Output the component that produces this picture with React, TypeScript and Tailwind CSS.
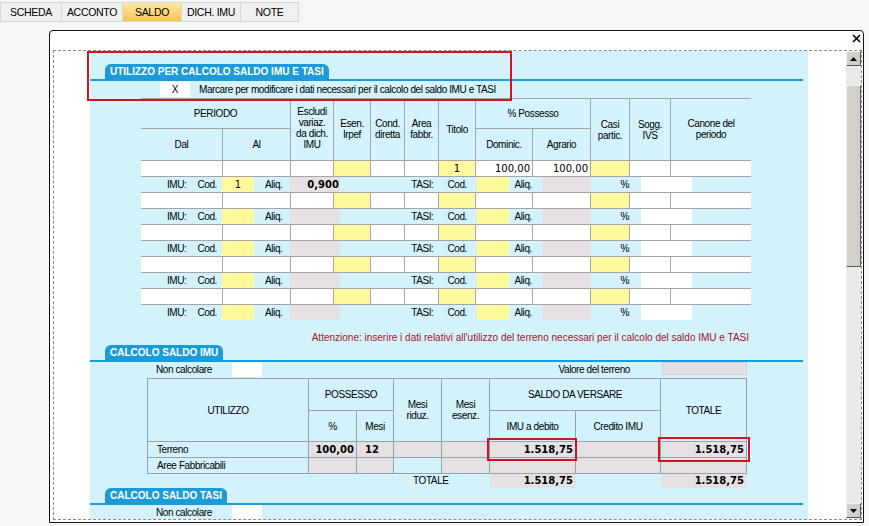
import React from 'react';

// Column template shared by the header and body rows of the "utilizzo" table
const useCols = 'grid grid-cols-[81px_68px_43px_37px_34px_34px_37px_57px_58px_39px_41px_81px]';
const imuCols = 'grid grid-cols-[161px_48px_37px_48px_48px_86px_85px_86px]';
const num = "font-['DejaVu_Sans',Verdana,sans-serif] tracking-normal";

const tabs = [
  { label: 'SCHEDA', cls: 'w-[62px] bg-[#f0f0f0]' },
  { label: 'ACCONTO', cls: 'w-[62px] bg-[#f0f0f0]' },
  { label: 'SALDO', cls: 'w-[60px] bg-linear-to-b from-[#fde9a4] to-[#f8c646]' },
  { label: 'DICH. IMU', cls: 'w-[60px] bg-[#f0f0f0]' },
  { label: 'NOTE', cls: 'w-[59px] bg-[#f0f0f0]' },
];

// cell background per column in the white input rows
const rowBg = ['bg-white', 'bg-white', 'bg-white', 'bg-[#fff99b]', 'bg-white', 'bg-white', 'bg-[#fff99b]', 'bg-white', 'bg-white', 'bg-[#fff99b]', 'bg-white', 'bg-white'];

const SectionTab = ({ title }: { title: string }) => (
  <div>
    <div className="flex pl-[15px]">
      <div className="h-[15px] px-[5px] rounded-t-[6px] bg-[#1b9bd7] text-white font-bold tracking-normal text-[10px] flex items-center">
        {title}
      </div>
    </div>
    <div className="h-[2px] mr-[5px] bg-[#1b9bd7]" />
  </div>
);

const RedBox = ({ cls }: { cls: string }) => (
  <div className={`absolute border-2 border-[#d3141c] pointer-events-none ${cls}`} />
);

const InputRow = ({ first }: { first?: boolean }) => (
  <div className={`${useCols} ${first ? 'h-[16px] border-b' : 'h-[17px] border-y'} border-[#a6a6a6]`}>
    {rowBg.map((bg, i) => (
      <div key={i} className={`${bg} ${i > 0 ? 'border-l border-[#a6a6a6]' : ''} flex items-center ${i === 6 ? 'justify-center' : 'justify-end pr-[2px]'} ${num}`}>
        {first && i === 6 && '1'}
        {first && (i === 7 || i === 8) && '100,00'}
      </div>
    ))}
  </div>
);

const ImuRow = ({ first }: { first?: boolean }) => (
  <div className="flex h-[15px] items-center">
    <div className="w-[81px] flex justify-end pr-[5px] gap-[11px]">
      <span>IMU:</span>
      <span>Cod.</span>
    </div>
    <div className={`w-[32px] h-full bg-[#fff99b] flex items-center justify-center ${num}`}>{first ? '1' : ''}</div>
    <div className="w-[36px] pl-[11px]">Aliq.</div>
    <div className={`w-[50px] h-full bg-[#e4e0e3] flex items-center justify-end pr-[1px] font-bold ${num}`}>{first ? '0,900' : ''}</div>
    <div className="w-[137px] flex justify-end pr-[10px] gap-[14px]">
      <span>TASI:</span>
      <span>Cod.</span>
    </div>
    <div className="w-[32px] h-full bg-[#fff99b]" />
    <div className="w-[33px] flex justify-end pr-[10px]">Aliq.</div>
    <div className="w-[49px] h-full bg-[#e4e0e3]" />
    <div className="w-[50px] flex justify-end pr-[12px]">%</div>
    <div className="w-[51px] h-full bg-white" />
  </div>
);

const UtilizzoTable = () => {
  const hc = 'flex items-center justify-center text-center leading-[11px] border-[#a6a6a6]';
  return (
    <div className="ml-[51px] w-[610px]">
      <div className={`${useCols} grid-rows-[30px_31px] border-y border-[#a6a6a6]`}>
        <div className={`${hc} col-start-1 col-span-2 row-start-1 border-b`}>PERIODO</div>
        <div className={`${hc} col-start-1 row-start-2`}>Dal</div>
        <div className={`${hc} col-start-2 row-start-2 border-l`}>Al</div>
        <div className={`${hc} col-start-3 row-start-1 row-span-2 border-l pb-[3px]`}>
          Escludi<br />variaz.<br />da dich.<br />IMU
        </div>
        <div className={`${hc} col-start-4 row-start-1 row-span-2 border-l pb-[2px]`}>
          Esen.<br />Irpef
        </div>
        <div className={`${hc} col-start-5 row-start-1 row-span-2 border-l pb-[2px]`}>
          Cond.<br />diretta
        </div>
        <div className={`${hc} col-start-6 row-start-1 row-span-2 border-l pb-[2px]`}>
          Area<br />fabbr.
        </div>
        <div className={`${hc} col-start-7 row-start-1 row-span-2 border-l`}>Titolo</div>
        <div className={`${hc} col-start-8 col-span-2 row-start-1 border-l border-b`}>% Possesso</div>
        <div className={`${hc} col-start-8 row-start-2 border-l`}>Dominic.</div>
        <div className={`${hc} col-start-9 row-start-2 border-l`}>Agrario</div>
        <div className={`${hc} col-start-10 row-start-1 row-span-2 border-l`}>
          Casi<br />partic.
        </div>
        <div className={`${hc} col-start-11 row-start-1 row-span-2 border-l`}>
          Sogg.<br />IVS
        </div>
        <div className={`${hc} col-start-12 row-start-1 row-span-2 border-l pb-[2px]`}>
          Canone del<br />periodo
        </div>
      </div>
      <InputRow first />
      <ImuRow first />
      {[0, 1, 2, 3].map((i) => (
        <React.Fragment key={i}>
          <InputRow />
          <ImuRow />
        </React.Fragment>
      ))}
    </div>
  );
};

const CalcoloImuTable = () => {
  const hc = 'flex items-center justify-center text-center leading-[11px] border-r border-b border-[#93a4ad]';
  const cell = 'border-r border-b border-[#93a4ad] flex items-center';
  const grey = 'bg-[#e4e0e3]';
  const bold = `font-bold ${num}`;
  return (
    <div className="ml-[57px] w-[600px]">
      <div className={`${imuCols} grid-rows-[32px_31px_16px_16px] border-l border-t border-[#93a4ad]`}>
        <div className={`${hc} col-start-1 row-start-1 row-span-2`}>UTILIZZO</div>
        <div className={`${hc} col-start-2 col-span-2 row-start-1`}>POSSESSO</div>
        <div className={`${hc} col-start-2 row-start-2`}>%</div>
        <div className={`${hc} col-start-3 row-start-2`}>Mesi</div>
        <div className={`${hc} col-start-4 row-start-1 row-span-2`}>
          Mesi<br />riduz.
        </div>
        <div className={`${hc} col-start-5 row-start-1 row-span-2`}>
          Mesi<br />esenz.
        </div>
        <div className={`${hc} col-start-6 col-span-2 row-start-1`}>SALDO DA VERSARE</div>
        <div className={`${hc} col-start-6 row-start-2`}>IMU a debito</div>
        <div className={`${hc} col-start-7 row-start-2`}>Credito IMU</div>
        <div className={`${hc} col-start-8 row-start-1 row-span-2`}>TOTALE</div>

        <div className={`${cell} pl-[9px]`}>Terreno</div>
        <div className={`${cell} ${grey} ${bold} justify-end pr-[2px]`}>100,00</div>
        <div className={`${cell} ${grey} ${bold} justify-center pr-[6px]`}>12</div>
        <div className={`${cell} ${grey}`} />
        <div className={`${cell} ${grey}`} />
        <div className={`${cell} ${grey} ${bold} justify-end pr-[2px] relative`}>
          1.518,75
          <RedBox cls="-left-[3px] -right-[2px] -top-[4px] -bottom-[4px]" />
        </div>
        <div className={`${cell} ${grey}`} />
        <div className={`${cell} ${grey} ${bold} justify-end pr-[2px] relative`}>
          1.518,75
          <RedBox cls="-left-[3px] -right-[4px] -top-[5px] -bottom-[5px]" />
        </div>

        <div className={`${cell} pl-[9px]`}>Aree Fabbricabili</div>
        <div className={`${cell} ${grey}`} />
        <div className={`${cell} ${grey}`} />
        <div className={cell} />
        <div className={`${cell} ${grey}`} />
        <div className={`${cell} ${grey}`} />
        <div className={`${cell} ${grey}`} />
        <div className={`${cell} ${grey}`} />
      </div>
      <div className={`${imuCols} h-[14px] border-l border-transparent`}>
        <div className="col-start-4 col-span-2 flex items-center pl-[19px]">TOTALE</div>
        <div className={`col-start-6 ${grey} ${bold} flex items-center justify-end pr-[3px]`}>1.518,75</div>
        <div className={`col-start-8 ${grey} ${bold} flex items-center justify-end pr-[3px]`}>1.518,75</div>
      </div>
    </div>
  );
};

const NonCalcolare = ({ children }: { children?: React.ReactNode }) => (
  <div className="flex h-[16px] items-start">
    <div className="w-[142px] pl-[66px] h-[15px] flex items-center">Non calcolare</div>
    <div className="w-[30px] h-[15px] bg-white" />
    {children}
  </div>
);

const Scrollbar = () => {
  const raised = 'bg-[#d4d0c8] border border-t-[#f4f3ef] border-l-[#f4f3ef] border-r-[#5a5a5a] border-b-[#5a5a5a]';
  return (
    <div className="w-[15px] h-full bg-[#ebe9e5] flex flex-col">
      <div className={`h-[15px] ${raised} flex items-center justify-center`}>
        <svg width="7" height="4" viewBox="0 0 7 4"><polygon points="0,4 7,4 3.5,0" fill="#000" /></svg>
      </div>
      <div className="h-[19px]" />
      <div className={`h-[182px] ${raised}`} />
      <div className="flex-1" />
      <div className={`h-[15px] ${raised} flex items-center justify-center mb-[1px]`}>
        <svg width="7" height="4" viewBox="0 0 7 4"><polygon points="0,0 7,0 3.5,4" fill="#000" /></svg>
      </div>
    </div>
  );
};

export default function App() {
  return (
    <div className="w-[869px] h-[526px] overflow-hidden bg-[#f4f7f3] font-['Liberation_Sans',Arial,sans-serif] text-[10px] tracking-[-0.4px] text-black leading-none">
      {/* top tab strip */}
      <div className="flex pt-[2px]">
        {tabs.map((t) => (
          <div
            key={t.label}
            className={`${t.cls} h-[20px] -ml-px first:ml-0 border border-[#d6d6d6] flex items-center justify-center text-[10.5px] tracking-[-0.3px]`}
          >
            {t.label}
          </div>
        ))}
      </div>

      {/* dialog */}
      <div className="ml-[49px] mt-[8px] w-[815px] h-[493px] bg-white border border-[#141414] rounded-t-[4px] flex flex-col">
        <div className="h-[19px] flex justify-end items-start pr-[2px] pt-[3px]">
          <svg width="9" height="9" viewBox="0 0 9 9">
            <path d="M1 1 L8 8 M8 1 L1 8" stroke="#000" strokeWidth="1.6" />
          </svg>
        </div>
        <div className="ml-[3px] mr-px h-[470px] border border-dashed border-[#8a8a8a] flex">
          <div className="relative w-[792px] h-full overflow-hidden">
            <div className="ml-[36px] w-[718px] bg-[#d3f2fb] pt-[13px] pb-[60px]">
              {/* section 1 */}
              <div className="relative">
                <SectionTab title="UTILIZZO PER CALCOLO SALDO IMU E TASI" />
                <div className="flex items-center h-[17px]">
                  <div className="ml-[70px] w-[30px] h-[15px] bg-white flex items-center justify-center">X</div>
                  <div className="ml-[9px]">Marcare per modificare i dati necessari per il calcolo del saldo IMU e TASI</div>
                </div>
                <RedBox cls="-left-[3px] -top-[13px] w-[425px] h-[50px]" />
              </div>
              <UtilizzoTable />
              <div className="h-[25px] pt-[12px] leading-[12px] text-right pr-[59px] text-[#a8121e] tracking-normal">
                Attenzione: inserire i dati relativi all'utilizzo del terreno necessari per il calcolo del saldo IMU e TASI
              </div>

              {/* section IMU */}
              <SectionTab title="CALCOLO SALDO IMU" />
              <NonCalcolare>
                <div className="flex-1 h-[15px] flex items-center justify-end pr-[32px]">Valore del terreno</div>
                <div className="w-[85px] h-[13px] bg-[#e4e0e3] border border-[#d2d0d2]" />
                <div className="w-[61px]" />
              </NonCalcolare>
              <CalcoloImuTable />

              {/* section TASI */}
              <SectionTab title="CALCOLO SALDO TASI" />
              <NonCalcolare />
            </div>
          </div>
          <Scrollbar />
        </div>
      </div>
    </div>
  );
}
